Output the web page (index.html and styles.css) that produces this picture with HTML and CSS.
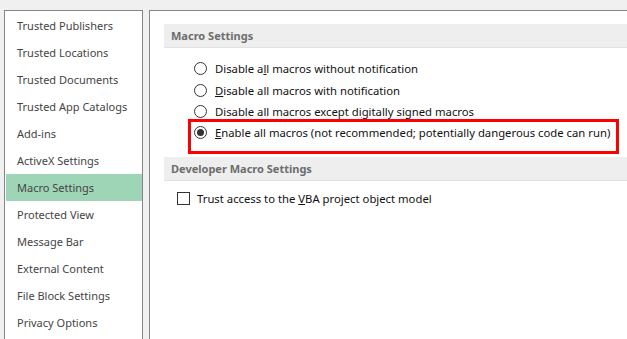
FILE: index.html
```html
<!DOCTYPE html>
<html lang="en">
<head>
    <meta charset="UTF-8">
    <meta name="viewport" content="width=device-width, initial-scale=1.0">
    <title>Trust Center</title>
    <link rel="stylesheet" href="styles.css">
</head>
<body>
    <div class="window">
        <ul class="nav">
            <li>Trusted Publishers</li>
            <li>Trusted Locations</li>
            <li>Trusted Documents</li>
            <li>Trusted App Catalogs</li>
            <li>Add-ins</li>
            <li>ActiveX Settings</li>
            <li class="active">Macro Settings</li>
            <li>Protected View</li>
            <li>Message Bar</li>
            <li>External Content</li>
            <li>File Block Settings</li>
            <li>Privacy Options</li>
        </ul>

        <div class="panel">
            <div class="section-title">Macro Settings</div>
            <div class="options">
                <label class="radio"><span class="dot"></span><span>Disable a<u>l</u>l macros without notification</span></label>
                <label class="radio"><span class="dot"></span><span><u>D</u>isable all macros with notification</span></label>
                <label class="radio"><span class="dot"></span><span>Disable all macros except di<u>g</u>itally signed macros</span></label>
                <label class="radio checked highlight"><span class="dot"></span><span><u>E</u>nable all macros (not recommended; potentially dangerous code can run)</span></label>
            </div>

            <div class="section-title">Developer Macro Settings</div>
            <label class="check"><span class="box"></span><span>Trust access to the <u>V</u>BA project object model</span></label>
        </div>
    </div>
</body>
</html>
```

FILE: styles.css
```css
body {
    margin: 0;
    background-color: #f0f0f0;
    font-family: "Noto Sans", "Open Sans", Arial, sans-serif;
    font-size: 11px;
    overflow: hidden;
}

.window {
    display: flex;
    gap: 6px;
    padding: 10px 0 0 4px;
    height: 340px;
}

.nav {
    list-style: none;
    margin: 0;
    padding: 1px 0 0 1px;
    width: 136px;
    background-color: white;
    border: 1px solid #858585;
    border-bottom: none;
}

.nav li {
    height: 27px;
    line-height: 27px;
    padding-left: 11px;
    color: #444;
    white-space: nowrap;
}

.nav li.active {
    background-color: #9fd5b7;
}

.panel {
    flex: 1;
    background-color: white;
    border-top: 1px solid #858585;
    border-left: 1px solid #858585;
    padding: 13px 0 0 14px;
}

.section-title {
    height: 23px;
    line-height: 23px;
    padding-left: 7px;
    background-color: #eeeeee;
    border-bottom: 1px solid #e2e2e2;
    color: #6d6d6d;
    font-weight: bold;
}

.options {
    display: flex;
    flex-direction: column;
    align-items: flex-start;
    padding: 10px 0 13px 30px;
}

.radio, .check {
    display: flex;
    align-items: center;
    gap: 8px;
    height: 21.4px;
    color: #111;
    font-size: 11.3px;
    white-space: nowrap;
}

.dot {
    width: 11px;
    height: 11px;
    border: 1px solid #333;
    border-radius: 50%;
    background-color: white;
    display: flex;
    align-items: center;
    justify-content: center;
}

.radio.checked .dot::after {
    content: "";
    width: 7px;
    height: 7px;
    border-radius: 50%;
    background-color: #333;
}

/* red annotation box drawn over the last option */
.highlight {
    position: relative;
}

.highlight::before {
    content: "";
    position: absolute;
    left: -6px;
    right: -9px;
    top: -3px;
    bottom: -10px;
    border: 3px solid #ff0000;
}

.check {
    margin: 7px 0 0 13px;
    gap: 7px;
}

.box {
    width: 11px;
    height: 11px;
    border: 1px solid #333;
    background-color: white;
}
```
